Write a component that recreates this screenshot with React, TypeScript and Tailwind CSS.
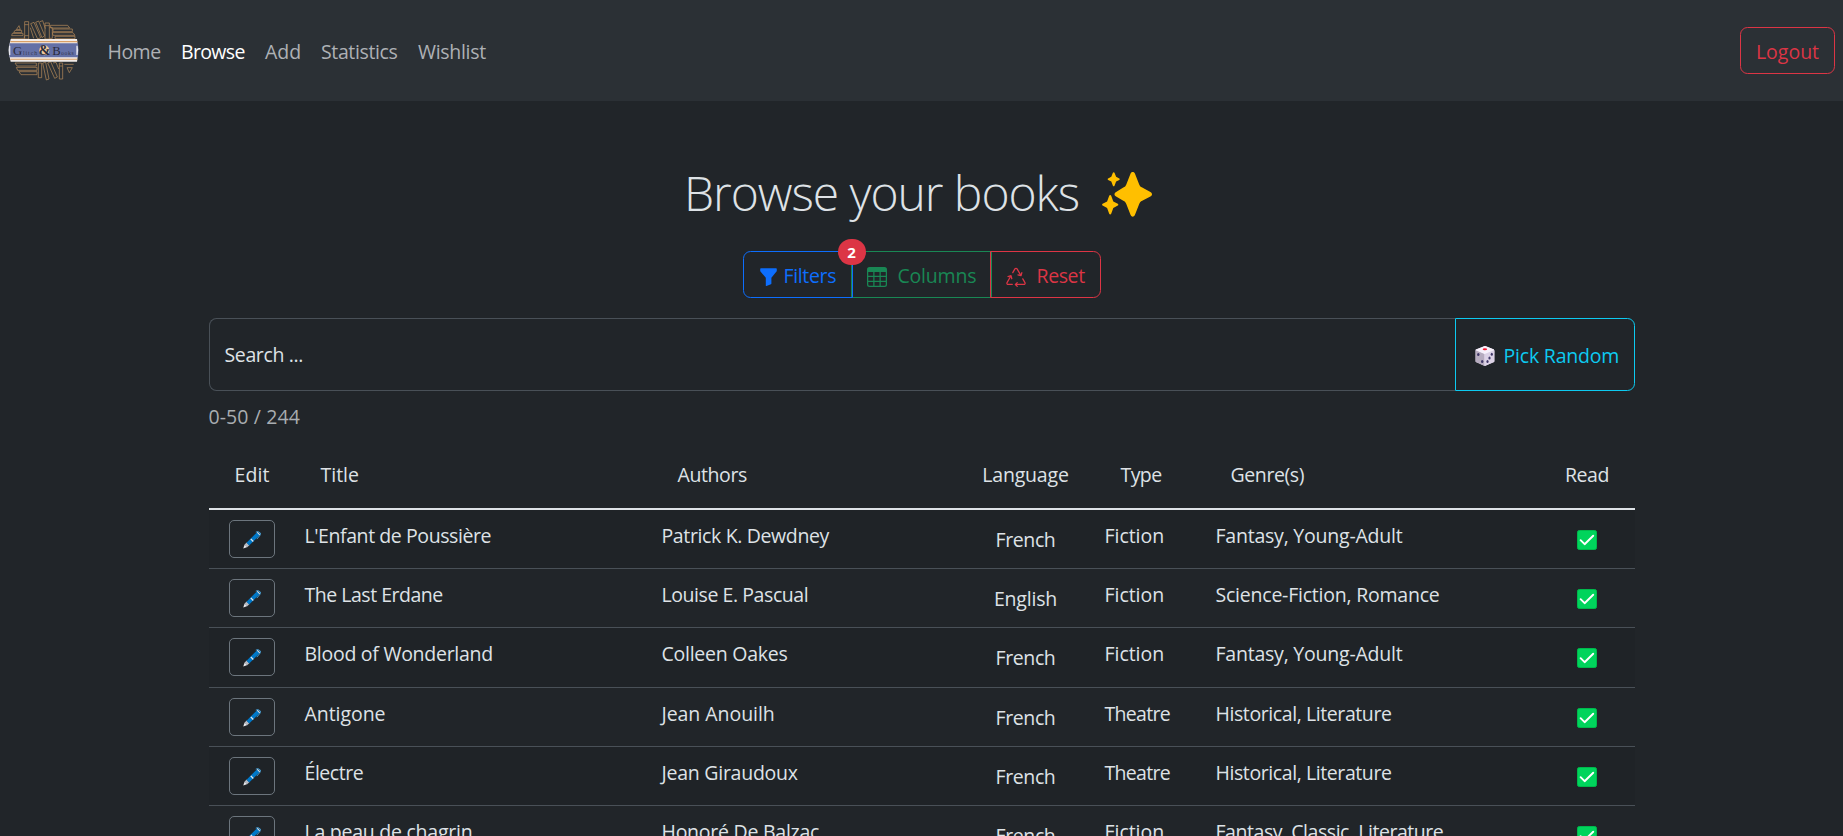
import type { ReactNode } from "react";

type Cell = { text: string; tracking: string };

type Book = {
  title: Cell;
  authors: Cell;
  language: Cell;
  type: Cell;
  genres: Cell;
  row: string;
};

const french: Cell = { text: "French", tracking: "tracking-[-0.4px]" };
const english: Cell = { text: "English", tracking: "tracking-[-0.2px]" };
const fiction: Cell = { text: "Fiction", tracking: "tracking-[-0.05px]" };
const theatre: Cell = { text: "Theatre", tracking: "tracking-[-0.7px]" };
const youngAdult: Cell = { text: "Fantasy, Young-Adult", tracking: "tracking-[-0.22px]" };
const historical: Cell = { text: "Historical, Literature", tracking: "tracking-[-0.41px]" };

const books: Book[] = [
  {
    title: { text: "L'Enfant de Poussière", tracking: "tracking-[-0.42px]" },
    authors: { text: "Patrick K. Dewdney", tracking: "tracking-[-0.36px]" },
    language: french,
    type: fiction,
    genres: youngAdult,
    row: "h-[59px] bg-[#1f2327]",
  },
  {
    title: { text: "The Last Erdane", tracking: "tracking-[-0.48px]" },
    authors: { text: "Louise E. Pascual", tracking: "tracking-[-0.43px]" },
    language: english,
    type: fiction,
    genres: { text: "Science-Fiction, Romance", tracking: "tracking-[-0.22px]" },
    row: "h-[59px]",
  },
  {
    title: { text: "Blood of Wonderland", tracking: "tracking-[-0.27px]" },
    authors: { text: "Colleen Oakes", tracking: "tracking-[-0.25px]" },
    language: french,
    type: fiction,
    genres: youngAdult,
    row: "h-[60px] bg-[#1f2327]",
  },
  {
    title: { text: "Antigone", tracking: "tracking-[-0.05px]" },
    authors: { text: "Jean Anouilh", tracking: "tracking-[-0.05px]" },
    language: french,
    type: theatre,
    genres: historical,
    row: "h-[59px]",
  },
  {
    title: { text: "Électre", tracking: "tracking-[-0.45px]" },
    authors: { text: "Jean Giraudoux", tracking: "tracking-[-0.25px]" },
    language: french,
    type: theatre,
    genres: historical,
    row: "h-[59px] bg-[#1f2327]",
  },
  {
    title: { text: "La peau de chagrin", tracking: "tracking-[-0.25px]" },
    authors: { text: "Honoré De Balzac", tracking: "tracking-[-0.25px]" },
    language: french,
    type: fiction,
    genres: { text: "Fantasy, Classic, Literature", tracking: "tracking-[-0.45px]" },
    row: "h-[59px]",
  },
];

const columns = "grid grid-cols-[86px_357px_314px_120px_119px_334px_96px]";

function Logo() {
  return (
    <svg className="h-[63px] w-[71px] shrink-0" viewBox="25 58 213 189" fill="none">
      <g stroke="#b08658" strokeWidth="2.2" strokeLinejoin="round">
        <path d="M58 78l4 12h-12zM46 92h20v7H42zM38 101h32v7H36zM34 116h40v-7" />
        <path d="M75 66h12v52H75zM75 75h12M75 108h12" />
        <path d="M93 72l10-4 20 46-9 4zM108 68l9-4 18 44-8 6zM121 66l8-3 8 24M92 84l10 32" />
        <path d="M136 70h13v48h-13zM136 78h13M150 84h8v32h-8" />
        <path d="M152 77h52l6 8h-56zM160 88h58v8h-58zM158 99h62l6 8h-66zM166 110h60v7h-60z" />
        <path d="M46 190h64v9H52zM50 203h62v9H54zM58 216h54v9H64z" />
        <path d="M116 190h10v44h-10zM129 190l9-2 10 50-8 3zM144 190l9-4 20 46-8 4zM160 190l9-2 8 20" />
        <path d="M179 190h10v48h-10zM179 199h10M194 194h28M202 204h16l-9 15z" />
      </g>
      <path d="M33 118h199q6 34 0 68H33q-10-34 0-68z" fill="#f3ece8" />
      <path d="M32 124h201v3.500H32zM32 177h201v3.500H32z" fill="#d9a066" />
      <path d="M30 131h205q3 21 0 42H30q-3-21 0-42z" fill="#6470a6" />
      <path d="M28 138q-3 14 0 28h4v-28zM234 138q3 14 0 28h-4v-28z" fill="#e6e6ee" />
      <circle cx="134" cy="152" r="15" fill="#f0c79a" />
      <g fill="#2a2b3c" fontFamily="'Liberation Serif', serif">
        <text x="40" y="165" fontSize="38" textLength="29">G</text>
        <text x="70" y="165" fontSize="17" textLength="42" opacity=".8">litch</text>
        <text x="117" y="166" fontSize="42" textLength="35" fontWeight="700">&amp;</text>
        <text x="158" y="165" fontSize="38" textLength="25">B</text>
        <text x="184" y="165" fontSize="17" textLength="38" opacity=".8">ooks</text>
      </g>
    </svg>
  );
}

function Sparkles() {
  return (
    <svg className="mt-3 h-[45px] w-[50px] shrink-0" viewBox="0 0 50 45" fill="#ffbf00">
      <path d="M28.6 1.6C29.2.3 30 0 30.7 0s1.6.4 2.2 1.6l4.3 10.8c.6 1.5 1.5 2.5 3 3.1l8.2 4.4c1.1.6 1.6 1.4 1.6 2.3s-.5 1.7-1.6 2.3l-8.2 4.3c-1.5.7-2.4 1.7-3 3.2l-4.3 11c-.6 1.3-1.4 1.7-2.2 1.7s-1.5-.4-2.1-1.7L24.300 32c-.6-1.500-1.500-2.500-3-3.200l-7.200-4.300c-1.100-.600-1.600-1.400-1.600-2.300s.5-1.700 1.600-2.300l7.200-4.400c1.500-.600 2.400-1.600 3-3.100z" />
      <path d="M10.900.700c.4-.7 1.200-.7 1.600 0l1.600 4.100 3.200 1.700c.6.400.6 1 0 1.400l-3.200 1.700-1.600 4.100c-.4.700-1.200.7-1.600 0L9.300 9.600 6.100 7.900c-.6-.4-.6-1 0-1.400l3.200-1.700z" />
      <path d="M7.200 23.700c.4-.9 1.600-.9 2 0l2.100 5.700 4.500 2.400c.7.400.7 1.300 0 1.700l-4.500 2.500-2.100 5.800c-.4.900-1.600.9-2 0L5.100 36 .6 33.500c-.7-.4-.7-1.300 0-1.700l4.500-2.400z" />
    </svg>
  );
}

function FunnelIcon() {
  return (
    <svg className="mt-[7px] h-[18px] w-[17px] shrink-0" viewBox="0 0 17 18" fill="currentColor">
      <path d="M.9.300h15.200q.7 0 .7.700v1.700q0 .5-.3.900L11.400 9.800v5.700q0 .6-.5.800l-4.400 1.600q-.7.200-.7-.5V9.800L.5 3.600Q.2 3.200.2 2.700V1Q.2.300.9.300z" />
    </svg>
  );
}

function TableIcon() {
  return (
    <svg className="mt-1.5 size-5 shrink-0" viewBox="0 0 16 16" fill="currentColor">
      <path d="M0 2a2 2 0 0 1 2-2h12a2 2 0 0 1 2 2v12a2 2 0 0 1-2 2H2a2 2 0 0 1-2-2zm15 2h-4v3h4zm0 4h-4v3h4zm0 4h-4v3h3a1 1 0 0 0 1-1zm-5 3v-3H6v3zm-5 0v-3H1v2a1 1 0 0 0 1 1zm-4-4h4V8H1zm0-4h4V4H1zm5-3v3h4V4zm4 4H6v3h4z" />
    </svg>
  );
}

function RecycleIcon() {
  return (
    <svg className="mt-1.5 size-5 shrink-0" viewBox="0 0 16 16" fill="currentColor">
      <path d="M9.302 1.256a1.500 1.500 0 0 0-2.604 0l-1.704 2.980a.5.5 0 0 0 .869.497l1.703-2.981a.5.5 0 0 1 .868 0l2.540 4.444-1.256-.337a.5.5 0 1 0-.260.966l2.415.647a.5.5 0 0 0 .613-.353l.647-2.415a.5.5 0 1 0-.966-.259l-.333 1.242zM2.973 7.773l-1.255.337a.5.5 0 1 1-.260-.966l2.416-.647a.5.5 0 0 1 .612.353l.647 2.415a.5.5 0 0 1-.966.259l-.333-1.242-2.545 4.454a.5.5 0 0 0 .434.748H5a.5.5 0 0 1 0 1H1.723A1.500 1.500 0 0 1 .421 12.240zm10.890 1.463a.5.5 0 1 0-.868.496l1.716 3.004a.5.5 0 0 1-.434.748h-5.570l.647-.646a.5.5 0 1 0-.708-.707l-1.500 1.500a.5.5 0 0 0 0 .707l1.500 1.500a.5.5 0 1 0 .708-.707l-.647-.647h5.570a1.500 1.500 0 0 0 1.302-2.244z" />
    </svg>
  );
}

function DieIcon() {
  return (
    <svg className="mt-0.5 size-5 shrink-0" viewBox="0 0 20 20">
      <path d="M10 0l9 3.600v12.200L10 20 .6 15.800V3.600z" fill="#e2d9ec" />
      <path d="M.6 3.900L9.500 7.600V20L1.300 16.300q-.8-.4-.8-1.200V4.600z" fill="#b6acbf" />
      <path d="M9.500 7.600l9.400-3.700q.7.200.7.900v10.300q0 .8-.8 1.200L9.500 20z" fill="#dcd2e6" />
      <path d="M9 .3q1-.4 2 0l8 3.300q-.1.500-.8.800L10.300 7.800q-.7.300-1.400 0L1.400 4.500Q.8 4.200.8 3.700z" fill="#f7f1fb" />
      <ellipse cx="9.900" cy="3.200" rx="2.200" ry="1" fill="#f8152f" />
      <g fill="#3f3767">
        <ellipse cx="3.300" cy="8.500" rx="1.200" ry="1.500" />
        <ellipse cx="7.200" cy="15.500" rx="1.200" ry="1.500" />
        <ellipse cx="16.800" cy="8.300" rx="1.100" ry="1.500" />
        <ellipse cx="14.500" cy="11.900" rx="1.100" ry="1.500" />
        <ellipse cx="12.500" cy="15.600" rx="1.100" ry="1.500" />
      </g>
    </svg>
  );
}

function PenIcon() {
  return (
    <svg className="mt-px size-[18px] shrink-0" viewBox="0 0 18 18">
      <path d="M.3 17.600l1.300-4.200 2.800 2.700z" fill="#e8e8ec" />
      <path d="M1.600 13.600l2-2 2.700 2.700-2.200 2z" fill="#b9bcc4" />
      <path d="M3.500 11.700L13.600 1.700q1.300-1 2.500.2t.2 2.500L6.200 14.400z" fill="#0078c8" />
      <path d="M7.300 8.200l2.500 2.800.9-.9-2.500-2.700z" fill="#e6e9ee" />
      <path d="M12.800 1.100L15 .600l2.300 1.300.3 1.700-3.800 4.500" fill="none" stroke="#49a5dd" strokeWidth=".9" />
      <path d="M13.800 1.600l2.600 2.700.8-.9L14.700.900z" fill="#d5dde6" />
    </svg>
  );
}

function CheckIcon() {
  return (
    <svg className="mt-2.5 size-5 shrink-0" viewBox="0 0 20 20">
      <rect x=".5" y=".5" width="19" height="19" rx="1.800" fill="#00d45c" stroke="#00b84c" />
      <path d="M3.600 10.200l4 4L16.200 5.700" fill="none" stroke="#fff" strokeWidth="1.900" strokeLinecap="round" strokeLinejoin="round" />
    </svg>
  );
}

function Label({ className, children }: { className: string; children: ReactNode }) {
  return <span className={`whitespace-nowrap ${className}`}>{children}</span>;
}

function Navbar() {
  return (
    <nav className="flex h-[101px] items-center justify-between bg-[#2b3035] pr-2 pl-2">
      <div className="flex items-center">
        <Logo />
        <div className="flex pt-0.5 pl-7 text-[#aeb1b5]">
          <Label className="w-[74px] pl-[0.5px] tracking-[-0.5px]">Home</Label>
          <Label className="w-[84px] text-white tracking-[-0.65px]">Browse</Label>
          <Label className="w-[56px]">Add</Label>
          <Label className="w-[97px] tracking-[-0.37px]">Statistics</Label>
          <Label className="tracking-[-0.3px]">Wishlist</Label>
        </div>
      </div>
      <button className="flex h-[47px] w-[95px] items-center justify-center rounded-[7.5px] border border-[#dc3545] pt-0.5 text-[#dc3545]">
        Logout
      </button>
    </nav>
  );
}

function Toolbar() {
  return (
    <div className="mx-auto flex h-[47px] w-[358px]">
      <button className="relative z-10 flex w-[110px] items-start rounded-l-[7.5px] border border-[#0d6efd] pt-[9px] pl-4 text-[#0d6efd]">
        <FunnelIcon />
        <Label className="ml-[7px] tracking-[-0.35px]">Filters</Label>
        <span className="absolute -top-[13px] -right-[14px] flex h-[26px] w-7 items-center justify-center rounded-full bg-[#dc3545] text-[15px] leading-none font-bold text-white">
          2
        </span>
      </button>
      <button className="-ml-0.5 flex w-[141px] items-start border border-[#198754] pt-[9px] pl-[15px] text-[#198754]">
        <TableIcon />
        <Label className="ml-[11px] tracking-[-0.2px]">Columns</Label>
      </button>
      <button className="-ml-0.5 flex w-[111px] items-start rounded-r-[7.5px] border border-[#dc3545] pt-[9px] pl-[15px] text-[#dc3545]">
        <RecycleIcon />
        <Label className="ml-[11px] tracking-[-0.4px]">Reset</Label>
      </button>
    </div>
  );
}

function SearchBar() {
  return (
    <div className="mt-5 flex h-[73px]">
      <div className="flex flex-1 items-center rounded-l-[7.5px] border border-r-0 border-[#495057] pl-[15px] tracking-[-0.38px]">
        Search ...
      </div>
      <button className="flex w-[180px] items-center rounded-r-[7.5px] border border-[#0dcaf0] pl-[19px] text-[#0dcaf0]">
        <DieIcon />
        <Label className="ml-[9px] pt-0.5 tracking-[-0.2px]">Pick Random</Label>
      </button>
    </div>
  );
}

function BookRow({ book }: { book: Book }) {
  return (
    <div className={`${columns} items-start border-b border-[#495057] pt-2.5 ${book.row}`}>
      <button className="ml-5 flex h-[38px] w-[46px] items-center justify-center rounded-[5px] border border-[#6c757d]">
        <PenIcon />
      </button>
      <Label className={`mt-px pl-2.5 ${book.title.tracking}`}>{book.title.text}</Label>
      <Label className={`mt-px pl-2.5 ${book.authors.tracking}`}>{book.authors.text}</Label>
      <Label className={`mt-[5px] text-center ${book.language.tracking}`}>{book.language.text}</Label>
      <Label className={`mt-px pl-[19px] ${book.type.tracking}`}>{book.type.text}</Label>
      <Label className={`mt-px pl-[11px] ${book.genres.tracking}`}>{book.genres.text}</Label>
      <span className="flex justify-center">
        <CheckIcon />
      </span>
    </div>
  );
}

export default function App() {
  return (
    <div className="h-[836px] overflow-hidden bg-[#212529] font-['Open_Sans','Noto_Sans',sans-serif] text-[19.5px] leading-[29px] text-[#dee2e6]">
      <Navbar />
      <main className="mx-auto w-[1426px] pt-[59px]">
        <div className="mx-auto mb-[26px] flex h-[65px] w-[479px]">
          <h1 className="w-[420px] shrink-0 pl-0.5 text-[48px] leading-[66px] font-light tracking-[-1.05px] whitespace-nowrap">
            Browse your books
          </h1>
          <Sparkles />
        </div>
        <Toolbar />
        <SearchBar />
        <p className="mt-[11px] tracking-[0.1px] text-[#a9adb1]">0-50 / 244</p>
        <div className={`${columns} mt-[29px] border-b-2 border-[#dee2e6] pb-[19px]`}>
          <Label className="pl-px text-center tracking-[0.1px]">Edit</Label>
          <Label className="pl-[26px]">Title</Label>
          <Label className="pl-[26px] tracking-[-0.4px]">Authors</Label>
          <Label className="text-center tracking-[-0.2px]">Language</Label>
          <Label className="pl-[35px] tracking-[-0.6px]">Type</Label>
          <Label className="pl-[26px] tracking-[-0.4px]">Genre(s)</Label>
          <Label className="pl-px text-center tracking-[-0.4px]">Read</Label>
        </div>
        {books.map((book) => (
          <BookRow key={book.title.text} book={book} />
        ))}
      </main>
    </div>
  );
}
